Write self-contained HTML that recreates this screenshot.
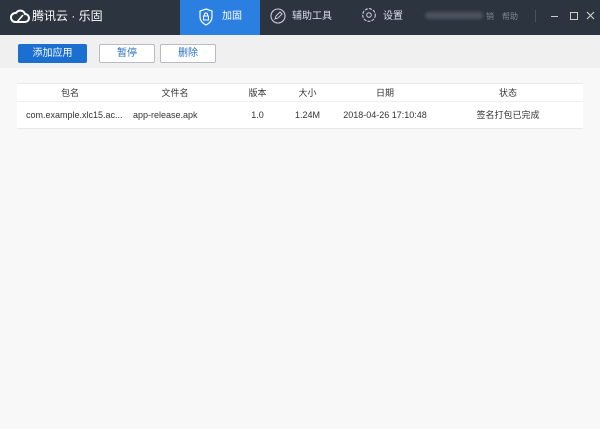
<!DOCTYPE html><html><head><meta charset="utf-8"><style>
body{margin:0;width:600px;height:429px;background:#f8f8f8;font-family:"Liberation Sans","Noto Sans CJK SC",sans-serif;position:relative;overflow:hidden}
.hd{position:absolute;left:0;top:0;width:600px;height:35px;background:#2c3440}
.a{position:absolute;white-space:nowrap;line-height:14px}
.tb{position:absolute;top:35px;left:0;width:600px;height:33px;background:#f0f0f0}
.btn{position:absolute;top:44px;height:17px;border:1px solid #b8bcc2;background:#fff;color:#2a6fc0;font-size:10px;text-align:center;line-height:17px;border-radius:2px}
.th,.td{position:absolute;font-size:9px;color:#333;text-align:center;white-space:nowrap;line-height:12px;height:12px}
</style></head><body>
<div class="hd"></div>
<svg class="a" style="left:10px;top:8px" width="20" height="16" viewBox="0 0 20 16"><path d="M5 14 H15 A4 4 0 0 0 15 6 A5 5 0 0 0 6 5 A4.5 4.5 0 0 0 5 14 Z" fill="none" stroke="#fff" stroke-width="2"/><path d="M7 14 L13 7" stroke="#fff" stroke-width="1.6"/></svg>
<div class="a" style="left:32px;top:9px;color:#fff;font-size:12px">腾讯云 · 乐固</div>
<div class="a" style="left:180px;top:0;width:80px;height:35px;background:#2a7fe0"></div>
<svg class="a" style="left:198px;top:8px" width="16" height="18" viewBox="0 0 16 18"><path d="M8 1 L14 3 V9 C14 13 11 15.5 8 17 C5 15.5 2 13 2 9 V3 Z" fill="none" stroke="#fff" stroke-width="1.2"/><rect x="5.5" y="8" width="5" height="4" fill="none" stroke="#fff"/><path d="M6.5 8 V6.5 A1.5 1.5 0 0 1 9.5 6.5 V8" fill="none" stroke="#fff"/></svg>
<div class="a" style="left:222px;top:10px;color:#fff;font-size:10px">加固</div>
<svg class="a" style="left:270px;top:8px" width="16" height="16" viewBox="0 0 16 16"><circle cx="8" cy="8" r="7" fill="none" stroke="#ccd" stroke-width="1.1"/><path d="M5 11 L6 8 L10 4 L12 6 L8 10 Z" fill="none" stroke="#ccd"/></svg>
<div class="a" style="left:292px;top:10px;color:#dde;font-size:10px">辅助工具</div>
<svg class="a" style="left:361px;top:7px" width="16" height="16" viewBox="0 0 16 16"><circle cx="8" cy="8" r="6.3" fill="none" stroke="#ccd" stroke-width="1.1" stroke-dasharray="3 1.2"/><circle cx="8" cy="8" r="2.3" fill="none" stroke="#ccd"/></svg>
<div class="a" style="left:383px;top:10px;color:#dde;font-size:10px">设置</div>
<div class="a" style="left:425px;top:12px;width:58px;height:7px;background:#4b535d;border-radius:4px;filter:blur(1.5px)"></div>
<div class="a" style="left:486px;top:10px;color:#7f8690;font-size:8px">销</div>
<div class="a" style="left:502px;top:10px;color:#7f8690;font-size:8px">帮助</div>
<div class="a" style="left:535px;top:10px;width:1px;height:12px;background:#4a525c"></div>
<div class="a" style="left:551px;top:16px;width:7px;height:1px;background:#ccc"></div>
<div class="a" style="left:570px;top:12px;width:6px;height:6px;border:1px solid #ccc"></div>
<svg class="a" style="left:586px;top:11px" width="9" height="9" viewBox="0 0 9 9"><path d="M1 1 L8 8 M8 1 L1 8" stroke="#ccc" stroke-width="1.2"/></svg>
<div class="tb"></div>
<div class="btn" style="left:18px;width:67px;background:#1a6fd0;border-color:#1a6fd0;color:#fff">添加应用</div>
<div class="btn" style="left:99px;width:54px">暂停</div>
<div class="btn" style="left:160px;width:54px">删除</div>
<div class="a" style="left:17px;top:83px;width:566px;height:44px;background:#fff;border-top:1px solid #e8e8e8;border-bottom:1px solid #e8e8e8"></div>
<div class="a" style="left:17px;top:101px;width:566px;height:1px;background:#efefef"></div>
<div class="th" style="left:40px;width:60px;top:87px">包名</div>
<div class="th" style="left:145px;width:60px;top:87px">文件名</div>
<div class="th" style="left:240px;width:35px;top:87px">版本</div>
<div class="th" style="left:290px;width:35px;top:87px">大小</div>
<div class="th" style="left:355px;width:60px;top:87px">日期</div>
<div class="th" style="left:478px;width:60px;top:87px">状态</div>
<div class="td" style="left:26px;top:109px;text-align:left">com.example.xlc15.ac...</div>
<div class="td" style="left:133px;top:109px;text-align:left">app-release.apk</div>
<div class="td" style="left:240px;width:35px;top:109px">1.0</div>
<div class="td" style="left:290px;width:35px;top:109px">1.24M</div>
<div class="td" style="left:335px;width:100px;top:109px">2018-04-26 17:10:48</div>
<div class="td" style="left:470px;width:76px;top:109px">签名打包已完成</div>
</body></html>
